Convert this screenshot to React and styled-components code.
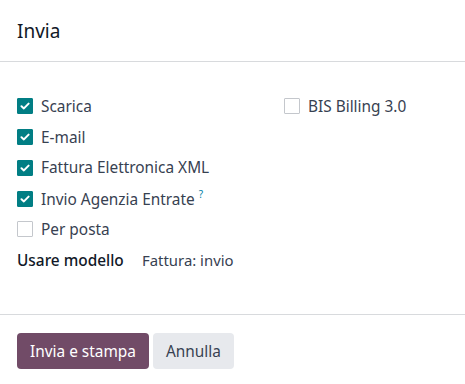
import React from 'react';
import styled, { createGlobalStyle } from 'styled-components';

const GlobalStyle = createGlobalStyle`
  html, body {
    margin: 0;
    padding: 0;
    background: #fff;
  }
  body {
    font-family: "Noto Sans", "Open Sans", sans-serif;
    color: #374151;
  }
`;

const Dialog = styled.div`
  width: 465px;
  height: 384px;
  display: flex;
  flex-direction: column;
  background: #fff;
`;

const Header = styled.div`
  height: 62px;
  box-sizing: border-box;
  display: flex;
  align-items: center;
  padding: 0 17px;
  border-bottom: 1px solid #d8dadd;
`;

const Title = styled.h4`
  margin: 0;
  font-size: 19px;
  font-weight: 400;
  color: #111827;
`;

const Body = styled.div`
  flex: 1;
  padding: 29px 17px 0;
  display: grid;
  grid-template-columns: 267px 1fr;
  align-content: start;
`;

const Column = styled.div`
  display: flex;
  flex-direction: column;
`;

const Row = styled.label`
  display: flex;
  align-items: center;
  gap: 8px;
  height: 30.75px;
  font-size: 15.4px;
  color: #374151;
`;

const Box = styled.span`
  flex: none;
  width: 16px;
  height: 16px;
  box-sizing: border-box;
  border-radius: 1px;
  display: inline-flex;
  align-items: center;
  justify-content: center;
  background: ${p => (p.checked ? '#017e84' : '#fff')};
  border: 1px solid ${p => (p.checked ? '#017e84' : '#c4c7cc')};
`;

const Help = styled.sup`
  color: #0180a5;
  font-size: 10px;
  margin-left: 4px;
  position: relative;
  top: -1px;
`;

const FieldRow = styled.div`
  display: flex;
  align-items: center;
  height: 30.75px;
  font-size: 15.4px;
`;

const FieldLabel = styled.span`
  width: 125px;
  color: #111827;
  font-weight: 500;
`;

const FieldValue = styled.span`
  color: #374151;
  font-size: 14.9px;
`;

const Footer = styled.div`
  border-top: 1px solid #d8dadd;
  padding: 18px 17px 15px;
  display: flex;
  gap: 4px;
`;

const Button = styled.button`
  height: 36px;
  padding: 0 13px;
  border: none;
  border-radius: 4px;
  font-family: "Noto Sans", "Open Sans", sans-serif;
  font-size: 15.4px;
  background: ${p => (p.primary ? '#714b67' : '#e7e9ed')};
  color: ${p => (p.primary ? '#fff' : '#374151')};
`;

const Check = ({ checked }) => (
  <Box checked={checked}>
    {checked && (
      <svg width="10" height="8" viewBox="0 0 10 8">
        <path d="M1.5 4.2 L3.9 6.4 L8.6 1.6" fill="none" stroke="#fff" strokeWidth="2" strokeLinecap="round" strokeLinejoin="round" />
      </svg>
    )}
  </Box>
);

const Option = ({ checked, children }) => (
  <Row>
    <Check checked={checked} />
    <span>{children}</span>
  </Row>
);

export default function App() {
  return (
    <Dialog>
      <GlobalStyle />
      <Header>
        <Title>Invia</Title>
      </Header>
      <Body>
        <Column>
          <Option checked>Scarica</Option>
          <Option checked>E-mail</Option>
          <Option checked>Fattura Elettronica XML</Option>
          <Option checked>
            Invio Agenzia Entrate<Help>?</Help>
          </Option>
          <Option>Per posta</Option>
          <FieldRow>
            <FieldLabel>Usare modello</FieldLabel>
            <FieldValue>Fattura: invio</FieldValue>
          </FieldRow>
        </Column>
        <Column>
          <Option>BIS Billing 3.0</Option>
        </Column>
      </Body>
      <Footer>
        <Button primary>Invia e stampa</Button>
        <Button>Annulla</Button>
      </Footer>
    </Dialog>
  );
}
